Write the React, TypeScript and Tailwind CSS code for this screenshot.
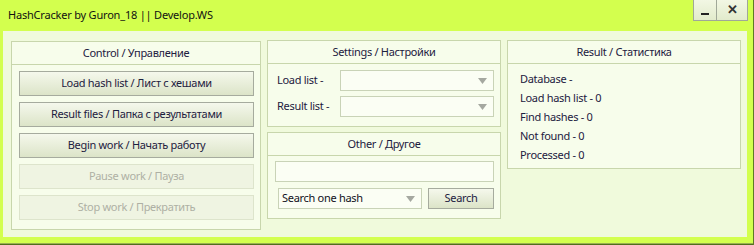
import React from "react";

const font = { fontFamily: '"Noto Sans", Roboto, sans-serif' };

function Panel({ title, className, children }: { title: string; className: string; children?: React.ReactNode }) {
  return (
    <div className={"flex flex-col border border-[#c8d6ac] bg-[#f7fdeb] " + className}>
      <div className="flex h-[23px] shrink-0 items-center justify-center border-b border-[#c8d6ac] text-[#1d2040]">
        {title}
      </div>
      {children}
    </div>
  );
}

function Btn({ label, disabled }: { label: string; disabled?: boolean }) {
  return disabled ? (
    <div className="flex h-[25px] items-center justify-center border border-[#dde4cc] bg-[#eff4e2] text-[#aeb0a4]">
      {label}
    </div>
  ) : (
    <div className="flex h-[25px] items-center justify-center border border-[#a6ab9e] bg-gradient-to-b from-[#f5f8ec] to-[#dce4c8] text-[#1d2040]">
      {label}
    </div>
  );
}

function Arrow() {
  return (
    <svg width="9" height="6" viewBox="0 0 9 6" className="shrink-0">
      <polygon points="0,0 9,0 4.5,6" fill="#a5a8a0" />
    </svg>
  );
}

function Select({ text, className }: { text?: string; className: string }) {
  return (
    <div className={"flex h-[21px] items-center justify-between border border-[#c9d3b7] bg-[#fbfef4] pl-[3px] pr-[6px] text-[#101020] " + className}>
      <span>{text ?? ""}</span>
      <Arrow />
    </div>
  );
}

export default function App() {
  return (
    <div style={font} className="flex h-[245px] w-[754px] flex-col overflow-hidden border-r border-[#5d7a24] bg-[#d3ff4e] text-[11px] tracking-[-0.3px]">
      <div className="flex h-[31px] shrink-0 items-start justify-between">
        <div className="pl-[8px] pt-[7px] tracking-[-0.2px] text-[#111]">HashCracker by Guron_18 || Develop.WS</div>
        <div className="mr-[5px] flex h-[21px] border border-t-0 border-[#a0a898]">
          <div className="flex w-[22px] items-end justify-center bg-gradient-to-b from-[#f2f7e4] to-[#e2ebcc] pb-[5px]">
            <div className="h-[2px] w-[8px] bg-[#222]" />
          </div>
          <div className="flex w-[31px] items-center justify-center border-l border-[#a0a898] bg-gradient-to-b from-[#f2f7e4] to-[#e2ebcc] text-[13px] font-bold text-[#333]">
            ✕
          </div>
        </div>
      </div>
      <div className="ml-[3px] flex h-[206px] w-[744px] shrink-0 items-start gap-[6px] bg-[#f0fadc] pl-[8px] pt-[9px]">
        <Panel title="Control / Управление" className="mt-[1px] h-[189px] w-[250px]">
          <div className="flex flex-col gap-[6px] pl-[7px] pr-[6px] pt-[6px]">
            <Btn label="Load hash list / Лист с хешами" />
            <Btn label="Result files / Папка с результатами" />
            <Btn label="Begin work / Начать работу" />
            <Btn label="Pause work / Пауза" disabled />
            <Btn label="Stop work / Прекратить" disabled />
          </div>
        </Panel>
        <div className="flex w-[234px] flex-col gap-[5px]">
          <Panel title="Settings / Настройки" className="h-[87px]">
            <div className="flex flex-col gap-[5px] pl-[9px] pr-[6px] pt-[6px] text-[#1d2040]">
              <div className="flex items-center justify-between">
                <span>Load list -</span>
                <Select className="w-[154px]" />
              </div>
              <div className="flex items-center justify-between">
                <span>Result list -</span>
                <Select className="w-[154px]" />
              </div>
            </div>
          </Panel>
          <Panel title="Other / Другое" className="h-[87px]">
            <div className="flex flex-col gap-[6px] pl-[7px] pr-[6px] pt-[5px]">
              <div className="h-[21px] border border-[#c9d3b7] bg-[#fbfef4]" />
              <div className="flex items-center justify-between pl-[3px]">
                <Select text="Search one hash" className="w-[144px]" />
                <div className="flex h-[21px] w-[66px] items-center justify-center border border-[#a6ab9e] bg-gradient-to-b from-[#f5f8ec] to-[#dce4c8] text-[#1d2040]">
                  Search
                </div>
              </div>
            </div>
          </Panel>
        </div>
        <Panel title="Result / Статистика" className="h-[129px] w-[234px]">
          <div className="flex flex-col pl-[12px] pt-[5px] leading-[19px] text-[#1d2040]">
            <div>Database -</div>
            <div>Load hash list - 0</div>
            <div>Find hashes - 0</div>
            <div>Not found - 0</div>
            <div>Processed - 0</div>
          </div>
        </Panel>
      </div>
      <div className="flex-1" />
      <div className="h-[1px] shrink-0 bg-[#98b050]" />
      <div className="h-[1px] shrink-0 bg-[#4f6e1c]" />
    </div>
  );
}
